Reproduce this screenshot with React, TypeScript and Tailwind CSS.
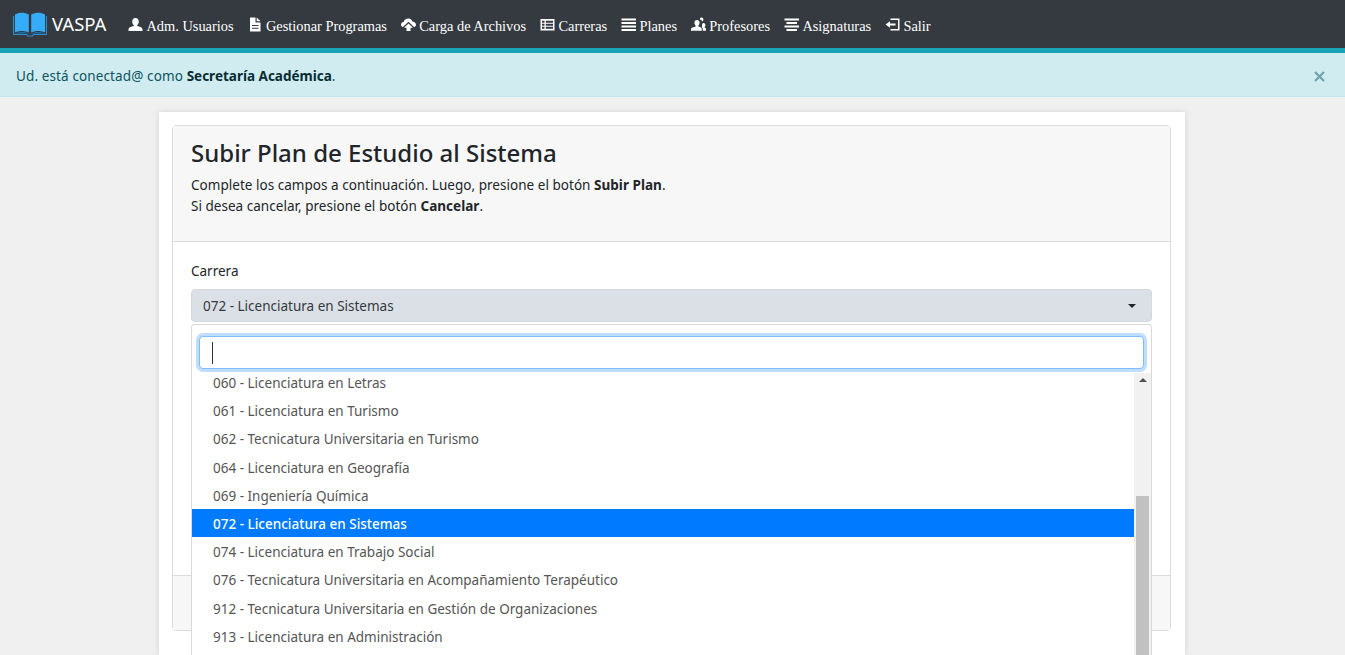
const sans = "font-['Noto_Sans','Open_Sans',sans-serif]";

function BookLogo() {
  return (
    <svg width="34" height="26" viewBox="0 0 34 26" className="shrink-0">
      <path d="M2 3.5C6 1 11.5 1 15.8 3.5V21.5C11.5 19.5 6 19.5 2 21.5Z" fill="#35acfa" />
      <path d="M32 3.5C28 1 22.5 1 18.2 3.5V21.5C22.5 19.5 28 19.5 32 21.5Z" fill="#35acfa" />
      <path d="M0.5 5V23.5H13.5L14.5 25H19.5L20.5 23.5H33.5V5" fill="none" stroke="#2a8fd4" strokeWidth="1.2" />
      <path d="M2 22.5C6 20.5 12 20.5 16.5 22.5H17.5C22 20.5 28 20.5 32 22.5Z" fill="#1d6fa8" />
    </svg>
  );
}

type NavIconName = "user" | "file" | "cloud" | "table" | "menu" | "group" | "center" | "exit";

function NavIcon({ name }: { name: NavIconName }) {
  return (
    <svg width="15" height="15" viewBox="0 0 15 15" fill="white" className="shrink-0 -translate-y-[2px]">
      {name === "user" && (
        <path d="M7.5 1C9.6 1 10.8 2.5 10.8 4.6C10.8 6.2 10 7.6 9.2 8.2V9C11.5 9.6 14.5 10.4 14.5 12.4V14H0.5V12.4C0.5 10.4 3.5 9.6 5.8 9V8.2C5 7.6 4.2 6.2 4.2 4.6C4.2 2.5 5.4 1 7.5 1Z" />
      )}
      {name === "file" && (
        <>
          <path d="M2 0.5H7.5V5.5H12.5V14.5H2Z M4 8V9H10.5V8Z M4 10.7V11.7H10.5V10.7Z" fillRule="evenodd" />
          <path d="M8.7 0.5L12.5 4.3H8.7Z" />
        </>
      )}
      {name === "cloud" && (
        <path d="M7.5 1.5C9.6 1.5 11 3 11.3 4.6C13.2 4.7 15 6 15 7.8C15 9.2 14.2 9.8 13 10L7.5 4.8L2 10C0.8 9.8 0 9 0 7.6C0 6 1.2 5 2.6 5C3 3 5 1.5 7.5 1.5ZM7.5 6.5L12 10.8H9.5V14H5.5V10.8H3Z" />
      )}
      {name === "table" && (
        <path d="M0.5 2H14.5V13.5H0.5ZM2 3.8V5.8H4.5V3.8ZM5.8 3.8V5.8H13V3.8ZM2 6.8V8.7H4.5V6.8ZM5.8 6.8V8.7H13V6.8ZM2 9.7V11.7H4.5V9.7ZM5.8 9.7V11.7H13V9.7Z" fillRule="evenodd" />
      )}
      {name === "menu" && (
        <path d="M0.5 1.5H15V3.5H0.5ZM0.5 5H15V7H0.5ZM0.5 8.5H15V10.5H0.5ZM0.5 12H15V14H0.5Z" />
      )}
      {name === "group" && (
        <path d="M6 3C7.7 3 8.6 4.2 8.6 5.8C8.6 7 8 8 7.4 8.5V9.4C9.3 10 10.8 10.5 10.8 12V13.7H0V12C0 10.5 2.8 10 4.6 9.4V8.5C4 8 3.4 7 3.4 5.8C3.4 4.2 4.3 3 6 3ZM10.5 0.5C11.7 0.5 12.4 1.4 12.4 2.6C12.4 3.5 12 4.2 11.5 4.6C11 3.6 10 2.6 8.8 2.2C9 1.2 9.6 0.5 10.5 0.5ZM12.6 6C13.7 6 14.4 6.9 14.4 8C14.4 8.9 14 9.6 13.6 9.9V10.5C14.4 10.8 15 11.3 15 12.2V13.7H11.8V11.9C11.8 10.9 11 10.2 10.6 9.9C11 9.6 11 9 11 8C11 6.9 11.6 6 12.6 6Z" />
      )}
      {name === "center" && (
        <path d="M0.5 1.5H15V3.5H0.5ZM2.5 5H13V7H2.5ZM0.5 8.5H15V10.5H0.5ZM2.5 12H13V14H2.5Z" />
      )}
      {name === "exit" && (
        <path d="M5.5 1.5H14.5V13.5H5.5V12H13V3H5.5ZM5 4.3V6.5H10.5V8.5H5V10.7L0.5 7.5Z" fillRule="evenodd" />
      )}
    </svg>
  );
}

const navItems: { icon: NavIconName; label: string }[] = [
  { icon: "user", label: "Adm. Usuarios" },
  { icon: "file", label: "Gestionar Programas" },
  { icon: "cloud", label: "Carga de Archivos" },
  { icon: "table", label: "Carreras" },
  { icon: "menu", label: "Planes" },
  { icon: "group", label: "Profesores" },
  { icon: "center", label: "Asignaturas" },
  { icon: "exit", label: "Salir" },
];

const options = [
  "060 - Licenciatura en Letras",
  "061 - Licenciatura en Turismo",
  "062 - Tecnicatura Universitaria en Turismo",
  "064 - Licenciatura en Geografía",
  "069 - Ingeniería Química",
  "072 - Licenciatura en Sistemas",
  "074 - Licenciatura en Trabajo Social",
  "076 - Tecnicatura Universitaria en Acompañamiento Terapéutico",
  "912 - Tecnicatura Universitaria en Gestión de Organizaciones",
  "913 - Licenciatura en Administración",
];

function CarreraDropdown() {
  return (
    <div className="absolute left-0 right-0 top-full mt-[2px] h-[340px] bg-white border border-black/15 rounded-[4px] flex flex-col z-10">
      <div className="pt-[11px] px-[7px] pb-[4px]">
        <div className="h-[33px] bg-white border border-[#80bdff] rounded-[4px] shadow-[0_0_0_3px_rgba(0,123,255,0.25)] flex items-center pl-[12px]">
          <span className="w-px h-[22px] bg-[#333]"></span>
        </div>
      </div>
      <div className="flex flex-1 overflow-hidden">
        <ul className="flex-1 -mt-[5px]">
          {options.map((o) => (
            <li
              key={o}
              className={
                o.startsWith("072")
                  ? "h-[28.2px] leading-[30px] pl-[21px] bg-[#007bff] text-white font-medium"
                  : "h-[28.2px] leading-[30px] pl-[21px] text-[#555]"
              }
            >
              {o}
            </li>
          ))}
        </ul>
        <div className="w-[17px] bg-[#f1f1f1] flex flex-col items-center">
          <span className="mt-[5px] w-0 h-0 border-x-[4px] border-x-transparent border-b-[4px] border-b-[#505050]"></span>
          <span className="w-[13px] mt-[114px] h-[200px] bg-[#c1c1c1]"></span>
        </div>
      </div>
    </div>
  );
}

export default function App() {
  return (
    <div className={`h-screen overflow-hidden flex flex-col bg-[#f0f0f0] ${sans} text-[13.5px] text-[#212529]`}>
      <nav className="h-[53px] shrink-0 bg-[#343a40] border-b-[5px] border-[#17a2b8] flex items-center pl-[13px]">
        <div className="flex items-center gap-[5px] mr-[22px] -mt-[1px]">
          <BookLogo />
          <span className="text-white text-[18.5px]">VASPA</span>
        </div>
        <div className="flex items-center gap-[14.3px] pt-[6px] font-['Liberation_Serif',serif] text-[14.4px] text-white">
          {navItems.map((item) => (
            <a key={item.label} className="flex items-center gap-[3px] whitespace-nowrap">
              <NavIcon name={item.icon} />
              {item.label}
            </a>
          ))}
        </div>
      </nav>

      <div className="h-[44px] shrink-0 bg-[#d1ecf1] border-b border-[#bee5eb] text-[#0c5460] flex items-center justify-between pl-[16px] pr-[20px] pt-[3px]">
        <p>
          <span className="tracking-[0.12px]">Ud. está conectad@ como </span>
          <strong className="text-[#062c33] font-bold">Secretaría Académica</strong>.
        </p>
        <svg width="11" height="11" viewBox="0 0 11 11" className="mt-[1px]">
          <path d="M1 1L10 10M10 1L1 10" stroke="#6fa3ad" strokeWidth="2.2" />
        </svg>
      </div>

      <main className="w-[1026px] ml-[159px] mt-[15px] flex-1 bg-white pl-[13px] pr-[14px] py-[13px] shadow-[0_0_6px_rgba(0,0,0,0.12)]">
        <section className="border border-[#dcdcdc] rounded-[4px]">
          <header className="h-[116px] bg-[#f7f7f7] border-b border-[#dcdcdc] pt-[11px] px-[18px]">
            <h1 className="text-[24px] leading-[32px] font-medium text-[#212529]">Subir Plan de Estudio al Sistema</h1>
            <p className="mt-[6px] leading-[21px] tracking-[0.03px]">
              Complete los campos a continuación. Luego, presione el botón <b>Subir Plan</b>.
            </p>
            <p className="leading-[21px] tracking-[0.03px]">
              Si desea cancelar, presione el botón <b>Cancelar</b>.
            </p>
          </header>
          <div className="px-[18px] pt-[19px] pb-[105px]">
            <label className="block leading-[21px] mb-[7px]">Carrera</label>
            <div className="relative">
              <button className="w-full h-[33px] bg-[#dae0e5] border border-[#d3d9df] rounded-[4px] flex items-center justify-between pl-[11px] pr-[15px] pt-[1px] text-[#343a40]">
                072 - Licenciatura en Sistemas
                <span className="w-0 h-0 border-x-[4px] border-x-transparent border-t-[4px] border-t-[#212529]"></span>
              </button>
              <CarreraDropdown />
            </div>
            <div className="mt-[120px] h-[28px] bg-[#e9ecef] border border-[#777] rounded-[4px]"></div>
          </div>
          <footer className="h-[55px] bg-[#f7f7f7] border-t border-[#dcdcdc]"></footer>
        </section>
      </main>
    </div>
  );
}
